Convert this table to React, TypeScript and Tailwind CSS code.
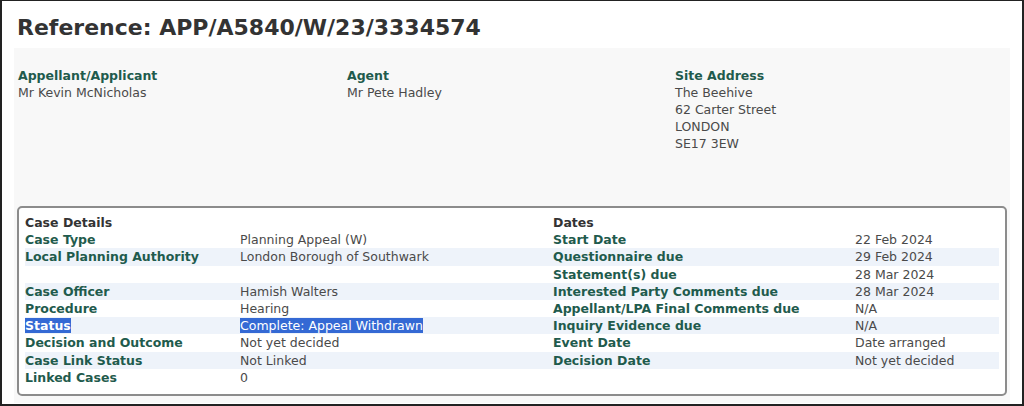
const rows: [string, string, string, string][] = [
  ['Case Details', '', 'Dates', ''],
  ['Case Type', 'Planning Appeal (W)', 'Start Date', '22 Feb 2024'],
  ['Local Planning Authority', 'London Borough of Southwark', 'Questionnaire due', '29 Feb 2024'],
  ['', '', 'Statement(s) due', '28 Mar 2024'],
  ['Case Officer', 'Hamish Walters', 'Interested Party Comments due', '28 Mar 2024'],
  ['Procedure', 'Hearing', 'Appellant/LPA Final Comments due', 'N/A'],
  ['Status', 'Complete: Appeal Withdrawn', 'Inquiry Evidence due', 'N/A'],
  ['Decision and Outcome', 'Not yet decided', 'Event Date', 'Date arranged'],
  ['Case Link Status', 'Not Linked', 'Decision Date', 'Not yet decided'],
  ['Linked Cases', '0', '', ''],
]

function Party({ title, lines }: { title: string; lines: string[] }) {
  return (
    <div className="flex flex-col">
      <span className="font-bold text-[#1f5b4d]">{title}</span>
      {lines.map((l) => (
        <span key={l} className="text-[#4a4a4a]">
          {l}
        </span>
      ))}
    </div>
  )
}

export default function App() {
  return (
    <div
      className="h-[406px] w-[1024px] overflow-hidden border-x-2 border-y border-b-2 border-[#222] bg-white text-[12.5px] leading-[17px]"
      style={{ fontFamily: '"DejaVu Sans", Verdana, sans-serif' }}
    >
      <h1 className="pl-[15px] pt-[14px] text-[22px] font-bold leading-[26px] text-[#333]">
        Reference: APP/A5840/W/23/3334574
      </h1>
      <div className="mx-[12px] mt-[7px] h-[355px] bg-[#f8f8f8] pt-[19px]">
        <div className="grid grid-cols-[329px_328px_1fr] pl-[4px]">
          <Party title="Appellant/Applicant" lines={['Mr Kevin McNicholas']} />
          <Party title="Agent" lines={['Mr Pete Hadley']} />
          <Party
            title="Site Address"
            lines={['The Beehive', '62 Carter Street', 'LONDON', 'SE17 3EW']}
          />
        </div>
        <div className="mx-[3px] mt-[54px] rounded-[5px] border-2 border-[#8c8c8c] bg-white px-[6px] pb-[8px] pt-[6px]">
          {rows.map((r, i) => (
            <div
              key={i}
              className={
                'grid h-[17.2px] grid-cols-[215px_313px_302px_1fr] ' +
                (i % 2 === 0 && i > 0 ? 'bg-[#eef3fa]' : '')
              }
            >
              <span className={i === 0 ? 'font-bold text-[#333]' : 'font-bold text-[#1f5b4d]'}>
                {i === 6 ? <span className="bg-[#3469d4] text-white">{r[0]}</span> : r[0]}
              </span>
              <span className="text-[#4a4a4a]">
                {i === 6 ? <span className="bg-[#3469d4] text-white">{r[1]}</span> : r[1]}
              </span>
              <span className={i === 0 ? 'font-bold text-[#333]' : 'font-bold text-[#1f5b4d]'}>
                {r[2]}
              </span>
              <span className="text-[#4a4a4a]">{r[3]}</span>
            </div>
          ))}
        </div>
      </div>
    </div>
  )
}
